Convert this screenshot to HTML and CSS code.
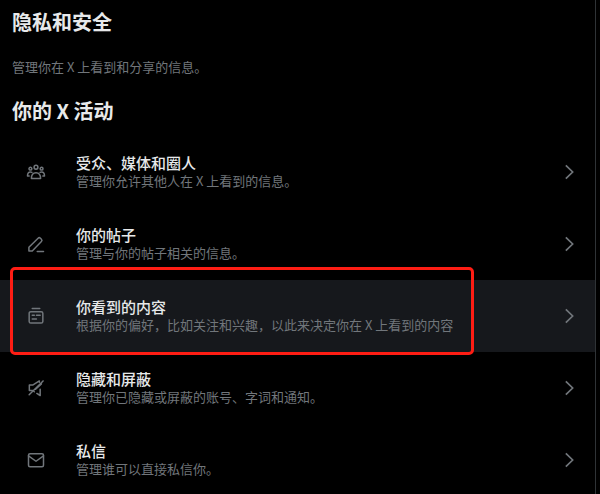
FILE: index.html
```html
<!DOCTYPE html>
<html lang="zh-CN">
<head>
<meta charset="utf-8">
<title>隐私和安全</title>
<link rel="stylesheet" href="styles.css">
</head>
<body>
<main class="panel">
  <header class="head">
    <h1 class="title">隐私和安全</h1>
    <p class="desc">管理你在 X 上看到和分享的信息。</p>
  </header>
  <h2 class="section">你的 X 活动</h2>
  <ul class="list">
    <li class="row">
      <svg class="icon" viewBox="0 0 24 24"><circle cx="12" cy="6.300" r="2.300"/><circle cx="5.300" cy="8" r="1.700"/><circle cx="18.700" cy="8" r="1.700"/><path d="M6.500 19.800c0-4.300 2.300-7 5.500-7s5.500 2.700 5.500 7z"/><path d="M3.800 16.800H1.800c0-3 1.200-4.800 3.500-4.800 .7 0 1.300.2 1.800.5M20.200 16.800h2c0-3-1.200-4.800-3.500-4.800-.7 0-1.300.2-1.800.5"/></svg>
      <div class="text"><div class="name">受众、媒体和圈人</div><div class="sub">管理你允许其他人在 X 上看到的信息。</div></div>
      <svg class="chev" viewBox="0 0 24 24"><path d="M8.200 4 16.400 12l-8.200 8"/></svg>
    </li>
    <li class="row">
      <svg class="icon" viewBox="0 0 24 24"><path d="M3.500 20.500v-4.500L14.500 5a2 2 0 0 1 2.800 0l1.200 1.200a2 2 0 0 1 0 2.800L7.500 20.500z"/><path d="M13.500 21h7.500"/></svg>
      <div class="text"><div class="name">你的帖子</div><div class="sub">管理与你的帖子相关的信息。</div></div>
      <svg class="chev" viewBox="0 0 24 24"><path d="M8.200 4 16.400 12l-8.200 8"/></svg>
    </li>
    <li class="row active">
      <svg class="icon" viewBox="0 0 24 24"><rect x="3.800" y="6.800" width="16.400" height="13.700" rx="2"/><path d="M7.500 3h9M7.500 11h2.500M12.500 11h4.500M7.500 15.500h5"/></svg>
      <div class="text"><div class="name">你看到的内容</div><div class="sub">根据你的偏好，比如关注和兴趣，以此来决定你在 X 上看到的内容</div></div>
      <svg class="chev" viewBox="0 0 24 24"><path d="M8.200 4 16.400 12l-8.200 8"/></svg>
    </li>
    <li class="row">
      <svg class="icon" viewBox="0 0 24 24"><path d="M4 8.500v6.500h4l2 1.500M11.500 13.500l7-6.500M8 8.500h-4M8 8.500l8-5v1.500"/><path d="M3.800 20 20.500 3.500"/><path d="M13 18.500l4 2.500v-7.500"/></svg>
      <div class="text"><div class="name">隐藏和屏蔽</div><div class="sub">管理你已隐藏或屏蔽的账号、字词和通知。</div></div>
      <svg class="chev" viewBox="0 0 24 24"><path d="M8.200 4 16.400 12l-8.200 8"/></svg>
    </li>
    <li class="row">
      <svg class="icon" viewBox="0 0 24 24"><rect x="3" y="4.500" width="18" height="15.500" rx="1.800"/><path d="M3 7l9 6.500 9-6.500"/></svg>
      <div class="text"><div class="name">私信</div><div class="sub">管理谁可以直接私信你。</div></div>
      <svg class="chev" viewBox="0 0 24 24"><path d="M8.200 4 16.400 12l-8.200 8"/></svg>
    </li>
  </ul>
  <div class="callout"></div>
</main>
</body>
</html>
```
FILE: styles.css
```css
* { box-sizing: border-box; }
html, body { margin: 0; height: 100%; background: #000; overflow: hidden; }
body { font-family: "Noto Sans CJK SC", "Noto Sans", sans-serif; }
.panel { position: relative; width: 596px; height: 494px; border-right: 1px solid #2f3336; overflow: hidden; }
.head { padding: 0 12px; }
.title { margin: 0; padding-top: 10px; font-size: 20px; line-height: 24px; font-weight: 700; color: #e7e9ea; }
.desc { margin: 0; padding-top: 23px; font-size: 13px; line-height: 20px; color: #71767b; }
.section { margin: 0; padding: 22px 12px 0; height: 59px; font-size: 20px; line-height: 24px; font-weight: 700; color: #e7e9ea; }
.list { margin: 0; padding: 0; list-style: none; }
.row { display: flex; align-items: center; height: 72px; padding: 0 16px 0 26px; }
.row.active { background: #16181c; }
.icon { flex: none; width: 20px; height: 20px; margin-right: 30px; fill: none; stroke: #71767b; stroke-width: 1.800; stroke-linejoin: round; stroke-linecap: round; }
.text { flex: 1; min-width: 0; }
.name { font-size: 15px; line-height: 18px; font-weight: 500; color: #e7e9ea; }
.sub { font-size: 13px; line-height: 18px; color: #71767b; }
.chev { flex: none; width: 20px; height: 20px; fill: none; stroke: #71767b; stroke-width: 2; }
.callout { position: absolute; left: 10px; top: 267px; width: 464px; height: 88px; border: 3px solid #fe1d14; border-radius: 5px; }
```
